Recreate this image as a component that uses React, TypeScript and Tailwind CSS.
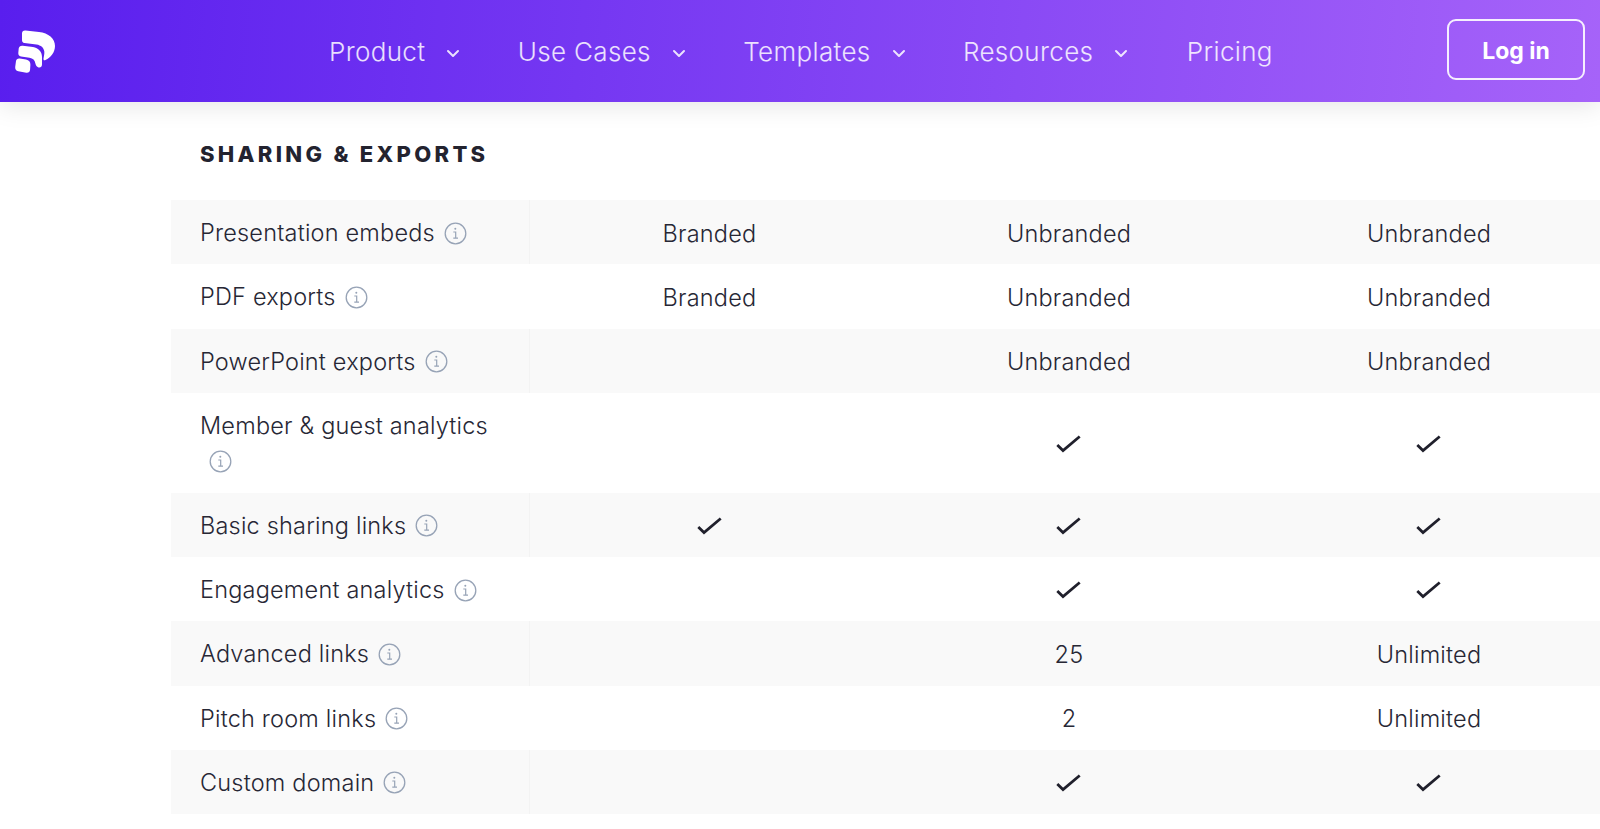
import React from "react";

const font = "font-['Inter',sans-serif]";

type Row = {
  label: string;
  cells: (string | boolean | null)[];
  tall?: boolean;
};

const rows: Row[] = [
  { label: "Presentation embeds", cells: ["Branded", "Unbranded", "Unbranded"] },
  { label: "PDF exports", cells: ["Branded", "Unbranded", "Unbranded"] },
  { label: "PowerPoint exports", cells: [null, "Unbranded", "Unbranded"] },
  { label: "Member & guest analytics", cells: [null, true, true], tall: true },
  { label: "Basic sharing links", cells: [true, true, true] },
  { label: "Engagement analytics", cells: [null, true, true] },
  { label: "Advanced links", cells: [null, "25", "Unlimited"] },
  { label: "Pitch room links", cells: [null, "2", "Unlimited"] },
  { label: "Custom domain", cells: [null, true, true] },
];

const navItems = [
  { label: "Product", menu: true },
  { label: "Use Cases", menu: true },
  { label: "Templates", menu: true },
  { label: "Resources", menu: true },
  { label: "Pricing", menu: false },
];

function Logo() {
  return (
    <svg width="42" height="46" viewBox="0 0 42 46" className="shrink-0">
      <path
        d="M7 4.500C7 2.500 8.300 1.400 10.500 1.600L24 3C33.500 4 40 9.500 40 17C40 23.500 35.500 28.500 30.500 31C29 31.700 28.300 31 28.500 29.500C28.900 27 29.500 25 29.300 22.500C28.800 18.500 26 16.200 21.500 15.400L9.500 14C7.800 13.700 7 12.800 7 11Z"
        fill="#fff"
      />
      <path
        d="M3.700 19.500C4 17.500 5.500 16.400 7.800 16.700L18 18C23.500 18.900 27 22.800 27 28L27 35.500C27 37.800 25.300 39 23.500 38.400C21.700 37.800 20.800 36.500 20.400 34.500C19.800 31 18 29.200 14.500 28.700L6 27.500C4 27.200 3.200 25.800 3.300 24Z"
        fill="#fff"
      />
      <path
        d="M1 32C1.300 30 2.800 29.200 4.800 29.500L11 30.400C14 30.900 15.500 32.800 15.400 35.800L15.100 40.500C14.900 42.800 13.400 44 11.300 43.700L3.300 42.300C1 41.900 0 40.300 .2 38Z"
        fill="#fff"
      />
    </svg>
  );
}

function Chevron() {
  return (
    <svg width="14" height="9" viewBox="0 0 14 9" fill="none" className="ml-[21px] mt-[3px]">
      <path d="M2 2L7 7L12 2" stroke="#ffffff" strokeOpacity="0.85" strokeWidth="2" strokeLinecap="round" strokeLinejoin="round" />
    </svg>
  );
}

function InfoIcon() {
  return (
    <svg width="23" height="23" viewBox="0 0 23 23" fill="none" className="shrink-0">
      <circle cx="11.500" cy="11.500" r="10.300" stroke="#97a3b6" strokeWidth="1.300" />
      <circle cx="11.300" cy="6.800" r="1" fill="#97a3b6" />
      <path d="M9.300 10H11.700V16M9.300 16.200H14" stroke="#97a3b6" strokeWidth="1.200" />
    </svg>
  );
}

function Check() {
  return (
    <svg width="26" height="20" viewBox="0 0 26 20" fill="none">
      <path d="M1.300 11L7 16.500L23.700 2.500" stroke="#20202c" strokeWidth="2.800" />
    </svg>
  );
}

export default function App() {
  return (
    <div className={`${font} h-[829px] w-[1600px] overflow-hidden bg-white text-[#272735]`}>
      <header className="relative z-10 flex h-[102px] items-center bg-[linear-gradient(95deg,#591eee_0%,#a663f9_100%)] shadow-[0_4px_24px_rgba(0,0,0,0.10)]">
        <div className="ml-[15px] mt-[2px] w-[314px]">
          <Logo />
        </div>
        <nav className="mt-[2px] flex items-center">
          {navItems.map((item, i) => (
            <div key={item.label} className={`flex items-center ${i === 3 ? "mr-[58.500px]" : "mr-[57.300px]"}`}>
              <span className="text-[26px] font-light leading-[32px] tracking-[0.35px] text-white/85">{item.label}</span>
              {item.menu && <Chevron />}
            </div>
          ))}
        </nav>
        <button className="absolute right-[15px] top-[19px] h-[61px] w-[138px] rounded-[9px] border-2 border-white/90 pt-[3px] text-[23px] font-bold text-white">
          Log in
        </button>
      </header>

      <main className="ml-[171px] w-[1440px]">
        <h2 className="pb-[31px] pl-[29px] pt-[38px] text-[22px] font-extrabold leading-[29px] tracking-[3.3px] text-[#23232f]">
          SHARING &amp; EXPORTS
        </h2>
        <div>
          {rows.map((row, i) => (
            <div
              key={row.label}
              className={`grid grid-cols-[359px_359px_360px_360px] ${i % 2 === 0 ? "bg-[#f9f9f9]" : "bg-white"} ${
                row.tall ? "h-[100px]" : "h-[64.25px]"
              }`}
            >
              <div
                className={`pl-[29px] text-[23.500px] font-light leading-[40px] tracking-[0.2px] ${
                  row.tall ? "pt-[13px]" : "flex items-center gap-[9px] pt-[2px]"
                } ${i % 2 === 0 ? "border-r border-[#f3f3f3]" : ""}`}
              >
                <span>{row.label}</span>
                {row.tall ? (
                  <div className="ml-[9px] mt-[4px]">
                    <InfoIcon />
                  </div>
                ) : (
                  <InfoIcon />
                )}
              </div>
              {row.cells.map((cell, j) => (
                <div key={j} className="flex items-center justify-center pt-[2px] text-[23.500px] font-light tracking-[0.2px]">
                  {cell === true ? <Check /> : cell}
                </div>
              ))}
            </div>
          ))}
        </div>
      </main>
    </div>
  );
}
